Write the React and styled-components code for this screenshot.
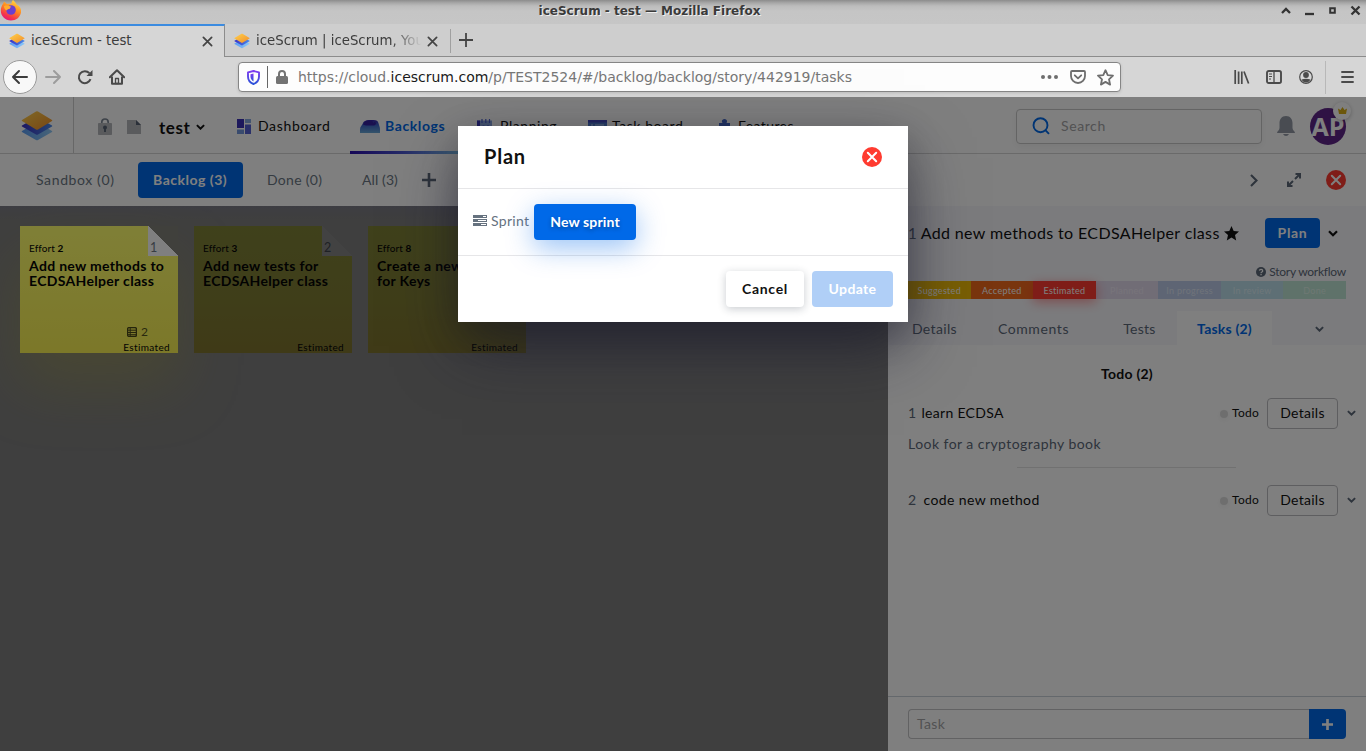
import React from "react";
import styled, { createGlobalStyle, css } from "styled-components";

const GlobalStyle = createGlobalStyle`
  *, *::before, *::after { box-sizing: border-box; }
  body { margin: 0; overflow: hidden; background: #fff; }
  svg { display: block; flex: none; }
`;

const uiFont = css`font-family: Lato, "Liberation Sans", sans-serif;`;

const Window = styled.div`
  width: 1366px;
  height: 751px;
  display: flex;
  flex-direction: column;
  overflow: hidden;
  font-family: "DejaVu Sans", sans-serif;
`;

/* ---------- browser chrome ---------- */

const TitleBar = styled.div`
  position: relative;
  height: 24px;
  flex: none;
  display: flex;
  align-items: center;
  justify-content: center;
  padding: 0 67px 3px 0;
  background: linear-gradient(#8c8c8c 0, #a8a8a8 3px, #bcbcbc 6px, #c5c5c5 11px, #c6c6c6);
  color: #3a3a3a;
  font-size: 12px;
  font-weight: 700;
  line-height: 20px;
  text-shadow: 1px 1px 0 #eee;
`;

const FirefoxMark = styled.div`
  position: absolute;
  left: 0;
  top: 0;
`;

const WindowControls = styled.div`
  position: absolute;
  right: 5px;
  top: 5px;
`;

const TabStrip = styled.div`
  height: 33px;
  flex: none;
  display: flex;
  background: #cecece;
  box-shadow: inset 0 -1px 0 #8c8c8c;
`;

const BrowserTab = styled.div`
  width: 225px;
  height: 33px;
  display: flex;
  align-items: center;
  padding: 1px 12px 0 9px;
  font-size: 13.3px;
  color: #3c3c3c;
  white-space: nowrap;
  ${(p) =>
    p.$active &&
    css`
      background: #d6d6d6;
      border-top: 2px solid #3b8be0;
      border-right: 1px solid #8c8c8c;
      padding: 0 11px 1px 9px;
    `}
  & > svg:first-child { margin-right: 6px; }
`;

const TabLabel = styled.div`
  flex: 1;
  overflow: hidden;
  line-height: 20px;
  margin-right: ${(p) => (p.$fade ? 2 : 0)}px;
  mask-image: ${(p) => (p.$fade ? "linear-gradient(90deg, #000 80%, transparent 98%)" : "none")};
`;

const TabDivider = styled.div`
  width: 1px;
  height: 24px;
  margin: 5px 8px 0 0;
  background: #a0a0a0;
`;

const NewTab = styled.div`
  display: flex;
  align-items: center;
  padding-bottom: 1px;
`;

const NavBar = styled.div`
  height: 40px;
  flex: none;
  display: flex;
  align-items: center;
  padding: 0 12px 0 3px;
  background: #d6d6d6;
`;

const BackButton = styled.div`
  width: 34px;
  height: 34px;
  border-radius: 50%;
  border: 1px solid #9a9a9a;
  background: #f8f8f8;
  display: flex;
  align-items: center;
  justify-content: center;
`;

const NavIcons = styled.div`
  display: flex;
  align-items: center;
  gap: 16px;
  margin-left: 7px;
  width: 194px;
  & > svg:nth-child(2) { margin-left: -1px; }
`;

const UrlBar = styled.div`
  width: 883px;
  height: 30px;
  display: flex;
  align-items: center;
  padding: 0 6px 0 8px;
  border: 1px solid #858585;
  border-radius: 4px;
  background: #fdfdfd;
  box-shadow: 0 1px 3px rgba(0, 0, 0, 0.12);
`;

const UrlDivider = styled.div`
  width: 1px;
  height: 22px;
  margin: 0 8px 0 7px;
  background: #666;
`;

const Url = styled.div`
  flex: 1;
  margin-left: 10px;
  color: #777;
  font-size: 14px;
  line-height: 20px;
  b { font-weight: 400; color: #1a1a1a; }
`;

const UrlActions = styled.div`
  display: flex;
  align-items: center;
  gap: 12px;
  & > svg:nth-child(-n + 2) { position: relative; left: 1px; }
`;

const ChromeActions = styled.div`
  flex: 1;
  display: flex;
  align-items: center;
  justify-content: flex-end;
  gap: 16px;
  & > svg:nth-child(2) { margin-right: 1px; }
`;

const ChromeDivider = styled.div`
  width: 1px;
  height: 33px;
  margin: 0 -1px 0 -4px;
  background: #b8b8b8;
`;

/* ---------- application frame ---------- */

const Viewport = styled.div`
  position: relative;
  flex: 1;
  min-height: 0;
  display: flex;
  flex-direction: column;
  background: #fff;
  color: #111;
  font-size: 14px;
  ${uiFont}
`;

const Label = styled.span`
  font-size: ${(p) => p.$size || 14}px;
  font-weight: ${(p) => (p.$bold ? 700 : 400)};
  color: ${(p) => p.$color || "inherit"};
  letter-spacing: ${(p) => p.$track ?? 0.35}px;
  line-height: 20px;
  white-space: nowrap;
`;

const AppHeader = styled.header`
  height: 57px;
  flex: none;
  display: flex;
  border-bottom: 1px solid #d4d4d4;
`;

const LogoBox = styled.div`
  width: 74px;
  padding: 13px 0 0 21px;
  border-right: 1px solid #cfcfcf;
`;

const ProjectBox = styled.div`
  width: 153px;
  display: flex;
  align-items: center;
  padding: 4px 0 0 24px;
  & > svg:nth-of-type(1) { margin: -2px 15px 0 0; }
  & > svg:nth-of-type(2) { margin: 0 18px 0 0; }
  & > span { margin: 2px 5px 0 0; }
`;

const NavItem = styled.div`
  width: ${(p) => p.$width}px;
  height: 57px;
  position: relative;
  display: flex;
  align-items: center;
  padding: 2px 0 0 10px;
  gap: ${(p) => p.$gap || 6}px;
  & > ${Label} { margin-top: -2px; }
  ${(p) =>
    p.$active &&
    css`
      &::after {
        content: "";
        position: absolute;
        left: 0;
        bottom: 0;
        width: 108px;
        height: 3px;
        background: linear-gradient(90deg, #2c0fae, #4a57d0 50%, #7cbde8);
      }
    `}
`;

const HeaderTools = styled.div`
  flex: 1;
  display: flex;
  justify-content: flex-end;
  align-items: center;
  padding: 2px 20px 0 0;
`;

const SearchField = styled.div`
  width: 246px;
  height: 35px;
  display: flex;
  align-items: center;
  gap: 11px;
  margin-right: 15px;
  padding-left: 15px;
  border: 1px solid #c8c8c8;
  border-radius: 4px;
  box-shadow: 0 3px 8px rgba(0, 0, 0, 0.05);
`;

const Avatar = styled.div`
  position: relative;
  width: 36px;
  height: 37px;
  margin-left: 15px;
  border-radius: 50%;
  background: #5f2589;
  color: #fff;
  display: flex;
  align-items: center;
  justify-content: center;
  font: 700 25px/34px "Open Sans", sans-serif;
`;

const CrownBadge = styled.div`
  position: absolute;
  right: -5px;
  top: -6px;
  width: 18px;
  height: 18px;
  border-radius: 50%;
  background: #fff;
  box-shadow: 0 1px 4px rgba(0, 0, 0, 0.25);
  display: flex;
  align-items: center;
  justify-content: center;
`;

const Toolbar = styled.div`
  height: 52px;
  flex: none;
  display: flex;
  align-items: center;
  padding: 0 20px;
`;

const FilterTab = styled.div`
  height: 36px;
  width: ${(p) => p.$width}px;
  display: flex;
  align-items: center;
  padding-left: ${(p) => p.$inset || 16}px;
  border-radius: 4px;
  color: #6b7783;
  ${(p) =>
    p.$active &&
    css`
      background: #0069e8;
      color: #fff;
    `}
`;

const ToolbarActions = styled.div`
  flex: 1;
  display: flex;
  align-items: center;
  justify-content: flex-end;
  gap: 25px;
  & > svg:first-child { margin-right: 4px; }
`;

const Body = styled.div`
  flex: 1;
  min-height: 0;
  display: flex;
`;

/* ---------- backlog board ---------- */

const Board = styled.main`
  width: 888px;
  display: flex;
  align-items: flex-start;
  gap: 16px;
  padding: 20px;
  background: linear-gradient(#7b7b86 0, #7d7d80 8px, #7e7e7e 14px);
`;

const Sticky = styled.article`
  position: relative;
  width: 158px;
  height: 127px;
  display: flex;
  flex-direction: column;
  padding: 13px 8px 0 9px;
  background: ${(p) =>
    p.$selected
      ? "linear-gradient(#ffff6e, #f8f052)"
      : "linear-gradient(#7f8237, #7f7c33 60%, #7e742e)"};
  box-shadow: ${(p) => (p.$selected ? "0 32px 60px rgba(172, 166, 66, 0.4)" : "none")};
  color: #050505;
  & > * { flex: none; }
`;

const Corner = styled.div`
  position: absolute;
  right: 0;
  top: 0;
  width: 30px;
  height: 30px;
  padding: 12px 0 0 2px;
  background: linear-gradient(
    45deg,
    ${(p) => (p.$selected ? "#fff" : "#858585")} 50%,
    ${(p) => (p.$selected ? "#808078" : "#7e7e7e")} 50.5%
  );
`;

const StickyTitle = styled.div`
  height: 68px;
  font-size: 14px;
  font-weight: 700;
  line-height: 15px;
  letter-spacing: 0.32px;
  white-space: pre-line;
`;

const Effort = styled.div`
  height: 19px;
  line-height: 18px;
  font-size: 10px;
  letter-spacing: 0.1px;
`;

const StickyTasks = styled.div`
  height: 12px;
  display: flex;
  align-items: center;
  justify-content: flex-end;
  gap: 4px;
  padding: 0 22px 0 0;
`;

const StickyState = styled.div`
  text-align: right;
  line-height: 18px;
  font-size: 10px;
  letter-spacing: 0.35px;
`;

/* ---------- details panel ---------- */

const Panel = styled.aside`
  width: 478px;
  display: flex;
  flex-direction: column;
  background: #fff;
`;

const PanelHead = styled.div`
  height: 139px;
  padding: 12px 20px 0;
  background: #f7f7fb;
`;

const StoryRow = styled.div`
  height: 30px;
  display: flex;
  align-items: center;
  padding-right: 8px;
  & > ${Label}:first-child { margin-right: 4px; }
  & > ${Label} + ${Label} { margin-right: 4px; }
`;

const Spacer = styled.div`flex: 1;`;

const PlanButton = styled.div`
  width: 55px;
  height: 30px;
  margin-right: 8px;
  display: flex;
  align-items: center;
  justify-content: center;
  border-radius: 4px;
  background: #0069e8;
  color: #fff;
`;

const WorkflowLink = styled.div`
  height: 20px;
  margin-top: 14px;
  display: flex;
  align-items: center;
  justify-content: flex-end;
  gap: 3px;
  color: #5c6878;
`;

const Steps = styled.div`
  height: 18px;
  margin: -1px 0 12px;
  display: grid;
  grid-template-columns: repeat(7, 1fr);
`;

const Step = styled.div`
  position: relative;
  z-index: ${(p) => (p.$current ? 1 : 0)};
  display: flex;
  align-items: center;
  justify-content: center;
  background: ${(p) => p.$bg};
  color: ${(p) => p.$fg || "#fff"};
  font-size: 9px;
  letter-spacing: 0.3px;
  box-shadow: ${(p) => (p.$current ? "0 3px 12px rgba(255, 40, 40, 0.45)" : "none")};
`;

const DetailTabs = styled.div`
  height: 34px;
  display: flex;
  margin: 0 -20px;
`;

const DetailTab = styled.div`
  width: ${(p) => p.$width}px;
  height: 34px;
  display: flex;
  align-items: center;
  justify-content: center;
  padding: 2px 0 0 ${(p) => p.$inset || 0}px;
  color: #5c6878;
  ${(p) => p.$active && css`background: #fff; color: #0069e8;`}
`;

const TaskList = styled.div`
  flex: 1;
  display: flex;
  flex-direction: column;
  padding: 19px 10px 0 20px;
`;

const GroupTitle = styled.div`
  height: 34px;
  text-align: center;
  padding-right: 10px;
`;

const TaskRow = styled.div`
  height: 31px;
  display: flex;
  align-items: center;
  & > ${Label} { margin-top: -1px; }
`;

const TaskName = styled(Label)`
  flex: 1;
  padding-left: ${(p) => p.$indent}px;
`;

const StatusDot = styled.div`
  width: 8px;
  height: 8px;
  margin-right: 4px;
  border-radius: 50%;
  background: #dcdcdc;
  box-shadow: 0 2px 6px rgba(0, 0, 0, 0.06);
`;

const DetailsButton = styled.div`
  width: 71px;
  height: 31px;
  margin: 0 9px 0 8px;
  display: flex;
  align-items: center;
  justify-content: center;
  padding-bottom: 1px;
  border: 1px solid #bdbdc0;
  border-radius: 4px;
`;

const TaskNote = styled.div`
  height: 38px;
  padding-top: 5px;
  color: #5c6878;
`;

const TaskRule = styled.div`
  width: 219px;
  height: 1px;
  margin: 0 0 17px 109px;
  background: #e2e2e2;
`;

const TaskForm = styled.div`
  height: 55px;
  display: flex;
  padding: 12px 20px;
  border-top: 1px solid #c9d0d8;
`;

const TaskInput = styled.div`
  flex: 1;
  height: 30px;
  display: flex;
  align-items: center;
  padding-left: 8px;
  border: 1px solid #c4c4c6;
  border-right: 0;
  border-radius: 4px 0 0 4px;
`;

const AddButton = styled.div`
  width: 37px;
  height: 30px;
  display: flex;
  align-items: center;
  justify-content: center;
  border-radius: 0 4px 4px 0;
  background: #0069e8;
`;

/* ---------- dialog ---------- */

const Backdrop = styled.div`
  position: absolute;
  inset: 0;
  z-index: 5;
  display: flex;
  justify-content: center;
  align-items: flex-start;
  padding-top: 29px;
  background: rgba(0, 0, 0, 0.5);
`;

const Dialog = styled.div`
  width: 450px;
  height: 196px;
  display: flex;
  flex-direction: column;
  background: #fff;
  box-shadow: 0 28px 60px -4px rgba(24, 24, 46, 0.58), 0 10px 34px rgba(0, 0, 0, 0.2);
`;

const DialogHead = styled.div`
  height: 63px;
  display: flex;
  align-items: center;
  justify-content: space-between;
  padding: 0 26px;
  border-bottom: 1px solid #e6e6e8;
  & > ${Label} { padding-bottom: 2px; margin-top: -1px; }
`;

const DialogBody = styled.div`
  height: 67px;
  display: flex;
  align-items: center;
  padding: 0 15px;
  border-bottom: 1px solid #e6e6e8;
  color: #66727f;
  & > svg { margin: 0 4px 3px 0; }
  & > ${Label} { width: 43px; padding-bottom: 2px; }
`;

const DialogFoot = styled.div`
  flex: 1;
  display: flex;
  align-items: center;
  justify-content: flex-end;
  gap: 8px;
  padding: 0 15px;
`;

const Button = styled.div`
  width: ${(p) => p.$width}px;
  height: 36px;
  display: flex;
  align-items: center;
  justify-content: center;
  border-radius: 4px;
  ${(p) =>
    p.$kind === "primary" &&
    css`
      background: #0069e8;
      color: #fff;
      text-shadow: 0 2px 4px rgba(0, 0, 0, 0.3);
      box-shadow: 0 8px 28px rgba(0, 105, 232, 0.4);
    `}
  ${(p) =>
    p.$kind === "plain" &&
    css`
      color: #111;
      box-shadow: 0 2px 8px rgba(30, 40, 60, 0.24);
    `}
  ${(p) => p.$kind === "disabled" && css`background: #b0cff7; color: #fff;`}
`;

/* ---------- drawings ---------- */

const IceLogo = ({ size, id }) => (
  <svg width={size} height={size} viewBox="0 0 32 32">
    <defs>
      <linearGradient id={`${id}o`} x1="0" y1="0" x2="1" y2="1">
        <stop offset="0" stopColor="#ffd24d" /><stop offset="1" stopColor="#f28c28" />
      </linearGradient>
      <linearGradient id={`${id}b`} x1="0" y1="0" x2="1" y2="0">
        <stop offset="0" stopColor="#3a2fc4" /><stop offset="1" stopColor="#4b8be8" />
      </linearGradient>
      <linearGradient id={`${id}c`} x1="0" y1="0" x2="1" y2="0">
        <stop offset="0" stopColor="#5a9df5" /><stop offset="1" stopColor="#8fc8f5" />
      </linearGradient>
    </defs>
    <path d="M1 21 16 12l15 9q.6.6 0 1L17 30q-1 .6-2 0L1 22q-.6-.4 0-1z" fill={`url(#${id}c)`} />
    <path d="M1 15.500 16 7l15 8.500q.6.500 0 1L17 24.500q-1 .6-2 0L1 16.500q-.6-.5 0-1z" fill={`url(#${id}b)`} />
    <path d="M1 10 15 1.600q1-.6 2 0L31 10q.6.500 0 1L17 19.500q-1 .6-2 0L1 11q-.6-.5 0-1z" fill={`url(#${id}o)`} />
  </svg>
);

const Firefox = () => (
  <svg width="22" height="22" viewBox="0 0 22 22">
    <defs>
      <linearGradient id="fx" x1=".8" y1="0" x2=".3" y2="1">
        <stop offset="0" stopColor="#ffe14a" /><stop offset=".45" stopColor="#ff8a1f" />
        <stop offset=".8" stopColor="#f5344b" /><stop offset="1" stopColor="#e2167f" />
      </linearGradient>
    </defs>
    <path d="M13 0c2 2 3 3 3.600 4.500C20 6 21.500 9 21 12.500 20 17.500 16 20.500 11 20.500 5 20.500.8 16 .8 10.500c0-3 1-5 2.500-7L4 1.500 7 4c2-.6 4-.2 4.500-.2C11.500 2 12 1 13 0z" fill="url(#fx)" />
    <circle cx="11" cy="10" r="4.800" fill="#6a3fd0" />
    <path d="M4 6c3-1 5 0 7 .6L9.500 9c-1.500 0-2 .5-3 1.500C5 9.500 4 8 4 6z" fill="#ffab2e" />
  </svg>
);

const Cross = ({ size = 11, color = "#444", w = 1.9 }) => (
  <svg width={size} height={size} viewBox="0 0 12 12" stroke={color} strokeWidth={w} strokeLinecap="round">
    <path d="M1.500 1.500l9 9M10.500 1.500l-9 9" />
  </svg>
);

const Plus = ({ size, color, w }) => (
  <svg width={size} height={size} viewBox="0 0 14 14" stroke={color} strokeWidth={w}>
    <path d="M7 0v14M0 7h14" />
  </svg>
);

const Chevron = ({ color = "#111", width = 10 }) => (
  <svg width={width} height={width * 0.7} viewBox="0 0 10 7" fill="none" stroke={color} strokeWidth="2.200">
    <path d="M1 1.200 5 5.200l4-4" />
  </svg>
);

const RedClose = () => (
  <svg width="20" height="20" viewBox="0 0 20 20">
    <circle cx="10" cy="10" r="10" fill="#ff3b30" />
    <path d="M5.800 5.800l8.400 8.400M14.200 5.800l-8.400 8.400" stroke="#fff" strokeWidth="2" strokeLinecap="round" />
  </svg>
);

const WindowIcons = () => (
  <svg width="82" height="12" viewBox="0 0 82 12" fill="none" stroke="#333" strokeWidth="2.300">
    <path d="M3 8 7 4l4 4" />
    <path d="M26 9h9" />
    <path d="M51.200 3.200h4.600v4.600h-4.600z" strokeWidth="2" />
    <path d="M72.500 1.500l8 8M80.500 1.500l-8 8" />
  </svg>
);

const NavArrow = ({ flip, color }) => (
  <svg width="18" height="16" viewBox="0 0 18 16" fill="none" stroke={color} strokeWidth="2" strokeLinecap="round" strokeLinejoin="round">
    <path d={flip ? "M2 8h14M10 2l6 6-6 6" : "M16 8H2M8 2 2 8l6 6"} />
  </svg>
);

const Reload = () => (
  <svg width="16" height="16" viewBox="0 0 16 16" fill="none" stroke="#4a4a4a" strokeWidth="2">
    <path d="M13.500 10.200A6 6 0 1 1 12.400 4.200" /><path d="M15.500 1v6h-6z" fill="#4a4a4a" stroke="none" />
  </svg>
);

const Home = () => (
  <svg width="16" height="16" viewBox="0 0 16 16" fill="none" stroke="#4a4a4a" strokeWidth="2" strokeLinejoin="round">
    <path d="M.8 8.300 8 1.200l7.200 7.100" strokeLinecap="round" /><path d="M3 7.500v7.300h10V7.500" />
    <path d="M6.500 14.500V9.500h3v5z" strokeWidth="1.300" />
  </svg>
);

const Shield = () => (
  <svg width="13" height="15" viewBox="0 0 13 15">
    <defs><linearGradient id="sh" x1="0" y1="0" x2="0" y2="1"><stop offset="0" stopColor="#7d3cf0" /><stop offset="1" stopColor="#2b53d8" /></linearGradient></defs>
    <path d="M6.500 1 12 2.300v4.200c0 3.500-2.500 6.300-5.500 7.500C3.500 12.800 1 10 1 6.500V2.300z" fill="none" stroke="url(#sh)" strokeWidth="1.900" strokeLinejoin="round" />
    <path d="M6.500 3.600v7.800C4.500 10.200 3.500 8.500 3.500 6.500V4.300z" fill="url(#sh)" />
  </svg>
);

const Padlock = () => (
  <svg width="12" height="14" viewBox="0 0 12 14">
    <path d="M3 7V4a3 3 0 0 1 6 0v3" fill="none" stroke="#737373" strokeWidth="2" /><rect y="6" width="12" height="8" rx="1.500" fill="#737373" />
  </svg>
);

const Dots = () => (
  <svg width="17" height="4" viewBox="0 0 17 4" fill="#6e6e6e"><circle cx="2" cy="2" r="2" /><circle cx="8.500" cy="2" r="2" /><circle cx="15" cy="2" r="2" /></svg>
);

const Pocket = () => (
  <svg width="16" height="14" viewBox="0 0 16 14" fill="none" stroke="#6e6e6e" strokeWidth="1.800" strokeLinecap="round" strokeLinejoin="round">
    <path d="M2 1h12q1 0 1 1v4a7 7 0 0 1-14 0V2q0-1 1-1z" /><path d="M4.800 5.300 8 8.300l3.200-3" />
  </svg>
);

const Star = () => (
  <svg width="17" height="17" viewBox="0 0 17 17" fill="none" stroke="#6e6e6e" strokeWidth="1.800" strokeLinejoin="round">
    <path d="M8.500 1.200l2.200 4.900 5.300.6-4 3.600 1.100 5.300-4.600-2.700-4.600 2.700L5 10.300 1 6.700l5.300-.6z" />
  </svg>
);

const SolidStar = () => (
  <svg width="15" height="15" viewBox="0 0 15 15" fill="#111">
    <path d="M7.500 0l2.200 4.900 5.300.6-4 3.500 1.200 5.500-4.700-2.900-4.700 2.900L4 9 0 5.500l5.300-.6z" />
  </svg>
);

const Library = () => (
  <svg width="16" height="14" viewBox="0 0 16 14" stroke="#4a4a4a" strokeWidth="1.700" fill="none"><path d="M1.200 0v14M4.600 1.500V14M7.800 1.500V14M10 1.500 14.600 13.500" /></svg>
);

const Sidebar = () => (
  <svg width="16" height="14" viewBox="0 0 16 14" stroke="#4a4a4a" fill="none"><rect x="1" y="1" width="14" height="12" rx="1.800" strokeWidth="1.900" /><path d="M8 1v12" strokeWidth="1.300" /><path d="M3 4h3M3 6.500h3M3 9h2" /></svg>
);

const Account = () => (
  <svg width="14" height="14" viewBox="0 0 14 14"><circle cx="7" cy="7" r="6.300" fill="none" stroke="#4a4a4a" strokeWidth="1.200" /><circle cx="7" cy="5" r="2.900" fill="#4a4a4a" /><path d="M2.500 9.500q4.500-1.600 9 0Q10 12.500 7 12.500T2.500 9.500z" fill="#4a4a4a" /></svg>
);

const Burger = () => (
  <svg width="13" height="12" viewBox="0 0 13 12" stroke="#4a4a4a" strokeWidth="1.900" strokeLinecap="round"><path d="M1 1h11M1 6h11M1 11h11" /></svg>
);

const LockTile = () => (
  <svg width="14" height="17" viewBox="0 0 14 17">
    <path d="M3.800 7V4.200a3.200 3.200 0 0 1 6.400 0V7" fill="none" stroke="#7c8694" strokeWidth="1.700" />
    <rect y="5" width="14" height="12" rx=".8" fill="#b4b6bb" /><circle cx="7" cy="9.500" r="2" fill="#566172" /><path d="M6.100 10h1.800v4H6.100z" fill="#566172" />
  </svg>
);

const NoteTile = () => (
  <svg width="14" height="14" viewBox="0 0 14 14"><path d="M0 0h9l5 5v9H0z" fill="#b4b6bb" /><path d="M9 0l5 5H9z" fill="#566172" /></svg>
);

const DashIcon = () => (
  <svg width="15" height="15" viewBox="0 0 15 15"><path d="M0 0h7v9H0z" fill="#3b30b8" /><path d="M8 0h6v4H8z" fill="#86a8e0" /><path d="M0 10.500h7V15H0z" fill="#7396dc" /><path d="M8 5.500h6V15H8z" fill="#5560d2" /></svg>
);

const BacklogIcon = () => (
  <svg width="20" height="13" viewBox="0 0 20 13">
    <defs><linearGradient id="bl" x1="0" y1="0" x2="0" y2="1"><stop offset="0" stopColor="#3522a8" /><stop offset=".4" stopColor="#3f66c8" /><stop offset="1" stopColor="#69a9d8" /></linearGradient></defs>
    <path d="M0 13V9.500C0 6.500 2 5.500 2.500 4 3.500 1 6 0 9 0h4.500c3 0 4.500 1 5 3.200C19 5.500 20 7 20 9v4z" fill="url(#bl)" />
    <path d="M3 4.500C4 1.500 6 .6 9 .6h3l1.200 2.200 2-1.300 1 2.500-2 1.500H6z" fill="#35209f" />
  </svg>
);

const PlanningIcon = () => (
  <svg width="15" height="15" viewBox="0 0 15 15"><path d="M0 1.500h15V15H0z" fill="#88a6e0" /><path d="M0 1.500h3V15H0z" fill="#3836b8" /><path d="M5 0v4M8.800 0v4M12.500 0v4" stroke="#4a5fd0" strokeWidth="1.200" /><path d="M5.500 6.500h2v2h-2zM10 6.500h2v2h-2z" fill="#4356c8" /></svg>
);

const BoardIcon = () => (
  <svg width="19" height="14" viewBox="0 0 19 14"><path d="M0 0h19v14H0z" fill="#4a78cc" /><path d="M0 0h19v2.500H0z" fill="#4348bd" /><path d="M3 5h2M7 5h9M3 9h2M7 9h9" stroke="#b7d0f0" strokeWidth="1" /></svg>
);

const FeatureIcon = () => (
  <svg width="17" height="16" viewBox="0 0 17 16"><path d="M4 4h3.500C6 1.800 7.500 0 9.500 0s3.300 1.800 2 4H15v3.500c3 0 2.500 4 0 4V16H4v-4C2 13 0 12 0 10s2-3 4-2z" fill="#4569c8" /></svg>
);

const Magnifier = () => (
  <svg width="18" height="18" viewBox="0 0 18 18" fill="none" stroke="#0069e8" strokeWidth="1.900" strokeLinecap="round"><circle cx="8.500" cy="8.200" r="7" /><path d="M13.600 13.400 16.500 16.300" /></svg>
);

const Bell = () => (
  <svg width="18" height="21" viewBox="0 0 18 21" fill="#9299a5"><path d="M9 0c4.500 0 6.500 3.500 6.500 7v5c0 2.500 2.500 3 2.500 5H0c0-2 2.500-2.500 2.500-5V7C2.500 3.500 4.500 0 9 0zM6 18h6q-1 2-3 2t-3-2z" /></svg>
);

const Crown = () => (
  <svg width="9" height="7" viewBox="0 0 9 7" fill="#d8ae14"><path d="M0 1.500 2.500 3 4.500 0l2 3L9 1.500 8 7H1z" /></svg>
);

const ChevronRight = () => (
  <svg width="8" height="13" viewBox="0 0 8 13" fill="none" stroke="#5c6878" strokeWidth="2.100"><path d="M1 1l5.500 5.500L1 12" /></svg>
);

const Expand = () => (
  <svg width="14" height="14" viewBox="0 0 14 14" fill="none" stroke="#5c6878" strokeWidth="2"><path d="M8.500 1H13v4.500M13 1 8 6M5.500 13H1V8.500M1 13l5-5" /></svg>
);

const TaskGlyph = () => (
  <svg width="10" height="10" viewBox="0 0 10 10"><rect x=".6" y=".6" width="8.800" height="8.800" rx="1.300" fill="none" stroke="#4b4919" strokeWidth="1.300" /><path d="M1 3.200h8M1 5.500h8M1 7.700h8M3.200 1v8" stroke="#4b4919" strokeWidth="1" /></svg>
);

const SprintGlyph = () => (
  <svg width="14" height="11" viewBox="0 0 14 11"><path d="M0 0h14v3H0zM0 4h14v3H0zM0 8h14v3H0z" fill="#66727f" /><path d="M10 1.500h3M5 5.500h8M8 9.500h5" stroke="#fff" strokeWidth="1" /></svg>
);

const Help = () => (
  <svg width="10" height="10" viewBox="0 0 10 10"><circle cx="5" cy="5" r="5" fill="#5c6878" /><path d="M3.400 3.700C3.600 2 6.700 2 6.700 3.900 6.700 5 5 5 5 6.200" fill="none" stroke="#fff" strokeWidth="1.300" /><path d="M4.400 7h1.300v1.300H4.400z" fill="#fff" /></svg>
);

/* ---------- content ---------- */

const stories = [
  { id: 1, effort: 2, title: "Add new methods to\nECDSAHelper class", tasks: 2, selected: true },
  { id: 2, effort: 3, title: "Add new tests for\nECDSAHelper class" },
  { id: 3, effort: 8, title: "Create a new class\nfor Keys" },
];

const steps = [
  { name: "Suggested", bg: "#f0bc08" },
  { name: "Accepted", bg: "#f26a1c" },
  { name: "Estimated", bg: "#ff3b30", current: true },
  { name: "Planned", bg: "#e3dbed", fg: "#efe9f5" },
  { name: "In progress", bg: "#bccbe9", fg: "#dfe6f4" },
  { name: "In review", bg: "#bddfeb", fg: "#dceef4" },
  { name: "Done", bg: "#bfe5d4", fg: "#dcf0e7" },
];

const Task = ({ id, indent, name, track }) => (
  <TaskRow>
    <Label $color="#5c6878">{id}</Label>
    <TaskName $indent={indent} $track={track}>{name}</TaskName>
    <StatusDot />
    <Label $size={12} $track={0.25}>Todo</Label>
    <DetailsButton><Label $track={0.3}>Details</Label></DetailsButton>
    <Chevron color="#5c6878" width={9} />
  </TaskRow>
);

export default function App() {
  return (
    <Window>
      <GlobalStyle />
      <TitleBar>
        <FirefoxMark><Firefox /></FirefoxMark>
        iceScrum - test — Mozilla Firefox
        <WindowControls><WindowIcons /></WindowControls>
      </TitleBar>
      <TabStrip>
        <BrowserTab $active>
          <IceLogo size={16} id="ta" />
          <TabLabel>iceScrum - test</TabLabel>
          <Cross />
        </BrowserTab>
        <BrowserTab>
          <IceLogo size={16} id="tb" />
          <TabLabel $fade>iceScrum | iceScrum, You</TabLabel>
          <Cross />
        </BrowserTab>
        <TabDivider />
        <NewTab><Plus size={14} color="#444" w={1.8} /></NewTab>
      </TabStrip>
      <NavBar>
        <BackButton><NavArrow color="#3c3c3c" /></BackButton>
        <NavIcons>
          <NavArrow flip color="#9c9c9c" />
          <Reload />
          <Home />
        </NavIcons>
        <UrlBar>
          <Shield />
          <UrlDivider />
          <Padlock />
          <Url>https://cloud.<b>icescrum.com</b>/p/TEST2524/#/backlog/backlog/story/442919/tasks</Url>
          <UrlActions><Dots /><Pocket /><Star /></UrlActions>
        </UrlBar>
        <ChromeActions>
          <Library /><Sidebar /><Account /><ChromeDivider /><Burger />
        </ChromeActions>
      </NavBar>

      <Viewport>
        <AppHeader>
          <LogoBox><IceLogo size={32} id="lg" /></LogoBox>
          <ProjectBox>
            <LockTile />
            <NoteTile />
            <Label $bold $size={17} $track={0.6}>test</Label>
            <Chevron width={9} />
          </ProjectBox>
          <NavItem $width={123}><DashIcon /><Label $track={0.65}>Dashboard</Label></NavItem>
          <NavItem $width={117} $active $gap={5}><BacklogIcon /><Label $bold $color="#0069e8" $track={0.6}>Backlogs</Label></NavItem>
          <NavItem $width={111} $gap={8}><PlanningIcon /><Label $track={0.55}>Planning</Label></NavItem>
          <NavItem $width={127} $gap={5}><BoardIcon /><Label $track={0.55}>Task board</Label></NavItem>
          <NavItem $width={110}><FeatureIcon /><Label $track={0.4}>Features</Label></NavItem>
          <HeaderTools>
            <SearchField><Magnifier /><Label $color="#a4a4a6" $track={0.6}>Search</Label></SearchField>
            <Bell />
            <Avatar>AP<CrownBadge><Crown /></CrownBadge></Avatar>
          </HeaderTools>
        </AppHeader>

        <Toolbar>
          <FilterTab $width={118}><Label $track={0.62}>Sandbox (0)</Label></FilterTab>
          <FilterTab $width={105} $inset={15} $active><Label $bold $track={0.52}>Backlog (3)</Label></FilterTab>
          <FilterTab $width={103} $inset={24}><Label $track={0.3}>Done (0)</Label></FilterTab>
          <FilterTab $width={76}><Label $track={0.1}>All (3)</Label></FilterTab>
          <Plus size={14} color="#5c6878" w={2.6} />
          <ToolbarActions><ChevronRight /><Expand /><RedClose /></ToolbarActions>
        </Toolbar>

        <Body>
          <Board>
            {stories.map((s) => (
              <Sticky key={s.id} $selected={s.selected}>
                <Corner $selected={s.selected}><Label $size={12.5} $color={s.selected ? "#707a86" : "#3e434a"}>{s.id}</Label></Corner>
                <Effort>Effort <b>{s.effort}</b></Effort>
                <StickyTitle>{s.title}</StickyTitle>
                <StickyTasks>
                  {s.tasks && (<><TaskGlyph /><Label $size={12} $color="#55531d" $track={0}>{s.tasks}</Label></>)}
                </StickyTasks>
                <StickyState>Estimated</StickyState>
              </Sticky>
            ))}
          </Board>

          <Panel>
            <PanelHead>
              <StoryRow>
                <Label $size={15} $color="#5c6878" $track={0}>1</Label>
                <Label $size={16} $track={0.36}>Add new methods to ECDSAHelper class</Label>
                <SolidStar />
                <Spacer />
                <PlanButton><Label $bold $track={0.7}>Plan</Label></PlanButton>
                <Chevron width={10} />
              </StoryRow>
              <WorkflowLink><Help /><Label $size={12} $track={-0.25}>Story workflow</Label></WorkflowLink>
              <Steps>
                {steps.map((s) => (
                  <Step key={s.name} $bg={s.bg} $fg={s.fg} $current={s.current}>{s.name}</Step>
                ))}
              </Steps>
              <DetailTabs>
                <DetailTab $width={93}><Label $track={0.35}>Details</Label></DetailTab>
                <DetailTab $width={105}><Label $track={0.6}>Comments</Label></DetailTab>
                <DetailTab $width={91} $inset={16}><Label $track={0.25}>Tests</Label></DetailTab>
                <DetailTab $width={95} $active><Label $bold $track={0.2}>Tasks (2)</Label></DetailTab>
                <DetailTab $width={94}><Chevron color="#5c6878" width={9} /></DetailTab>
              </DetailTabs>
            </PanelHead>
            <TaskList>
              <GroupTitle><Label $bold $track={0.25}>Todo (2)</Label></GroupTitle>
              <Task id={1} indent={5} name="learn ECDSA" track={0.3} />
              <TaskNote><Label $track={0.45}>Look for a cryptography book</Label></TaskNote>
              <TaskRule />
              <Task id={2} indent={7} name="code new method" track={0.4} />
            </TaskList>
            <TaskForm>
              <TaskInput><Label $color="#a4a4a6">Task</Label></TaskInput>
              <AddButton><Plus size={11} color="#fff" w={3.4} /></AddButton>
            </TaskForm>
          </Panel>
        </Body>

        <Backdrop>
          <Dialog>
            <DialogHead><Label $bold $size={20} $track={0.8}>Plan</Label><RedClose /></DialogHead>
            <DialogBody>
              <SprintGlyph />
              <Label $track={0.3}>Sprint</Label>
              <Button $kind="primary" $width={102}><Label $bold $track={0.15}>New sprint</Label></Button>
            </DialogBody>
            <DialogFoot>
              <Button $kind="plain" $width={78}><Label $bold $track={0.7}>Cancel</Label></Button>
              <Button $kind="disabled" $width={81}><Label $bold $track={0.35}>Update</Label></Button>
            </DialogFoot>
          </Dialog>
        </Backdrop>
      </Viewport>
    </Window>
  );
}
